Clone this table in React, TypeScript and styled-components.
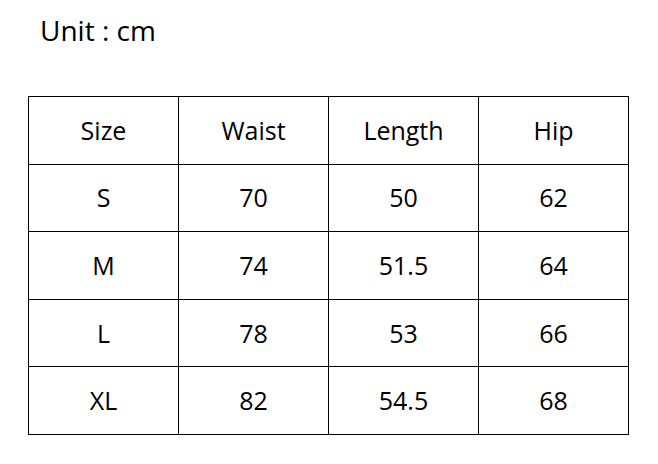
import React from "react";
import styled, { createGlobalStyle } from "styled-components";

const Global = createGlobalStyle`
  html, body { margin: 0; padding: 0; background: #ffffff; }
  body { font-family: "Open Sans", Lato, sans-serif; color: #000; }
`;

const Page = styled.div`
  width: 658px;
  height: 464px;
  box-sizing: border-box;
  padding: 12px 0 0 28px;
  display: flex;
  flex-direction: column;
`;

const Title = styled.div`
  font-size: 28px;
  line-height: 36px;
  padding-left: 12px;
  height: 36px;
`;

const Table = styled.table`
  margin-top: 48px;
  border-collapse: collapse;
  width: 601px;
  table-layout: fixed;
`;

const Row = styled.tr`
  height: 67.6px;
`;

const Cell = styled.td`
  border: 1px solid #000;
  padding: 0;
  text-align: center;
  vertical-align: middle;
  font-size: 25px;
  line-height: 1;
`;

const header = ["Size", "Waist", "Length", "Hip"];
const rows = [
  ["S", "70", "50", "62"],
  ["M", "74", "51.5", "64"],
  ["L", "78", "53", "66"],
  ["XL", "82", "54.5", "68"],
];

export default function App() {
  return (
    <Page>
      <Global />
      <Title>Unit : cm</Title>
      <Table>
        <tbody>
          <Row>
            {header.map((h) => (
              <Cell key={h}>{h}</Cell>
            ))}
          </Row>
          {rows.map((r) => (
            <Row key={r[0]}>
              {r.map((c, i) => (
                <Cell key={i}>{c}</Cell>
              ))}
            </Row>
          ))}
        </tbody>
      </Table>
    </Page>
  );
}
